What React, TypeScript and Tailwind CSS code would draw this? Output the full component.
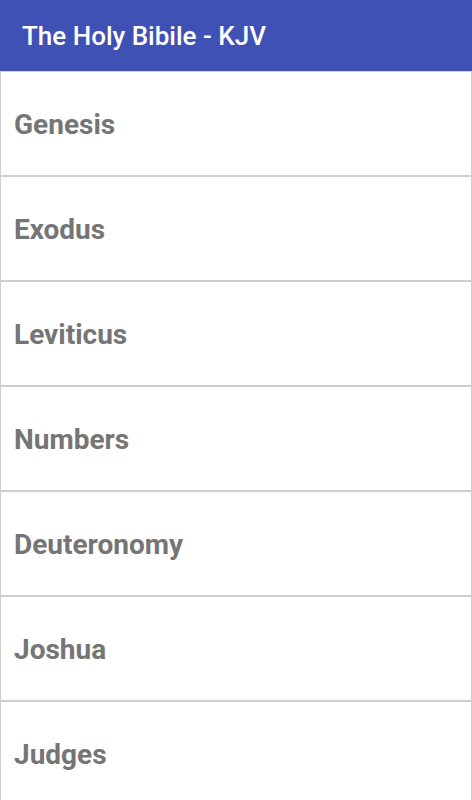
const books = ['Genesis', 'Exodus', 'Leviticus', 'Numbers', 'Deuteronomy', 'Joshua', 'Judges'];

export default function App() {
    return (
        <div className="h-[800px] w-[472px] overflow-hidden bg-white font-['Roboto',sans-serif]">
            <header className="flex h-[71px] items-center bg-[#3f51b5] px-[22px] pt-[2px]">
                <h1 className="text-[26px] font-medium text-white">The Holy Bibile - KJV</h1>
            </header>
            <ul>
                {books.map(book => (
                    <li
                        key={book}
                        className="flex h-[105px] items-center border border-[#cfcfcf] bg-white px-[13px] pt-[3px]"
                    >
                        <span className="text-[28px] font-bold text-[#757575]">{book}</span>
                    </li>
                ))}
            </ul>
        </div>
    );
}
